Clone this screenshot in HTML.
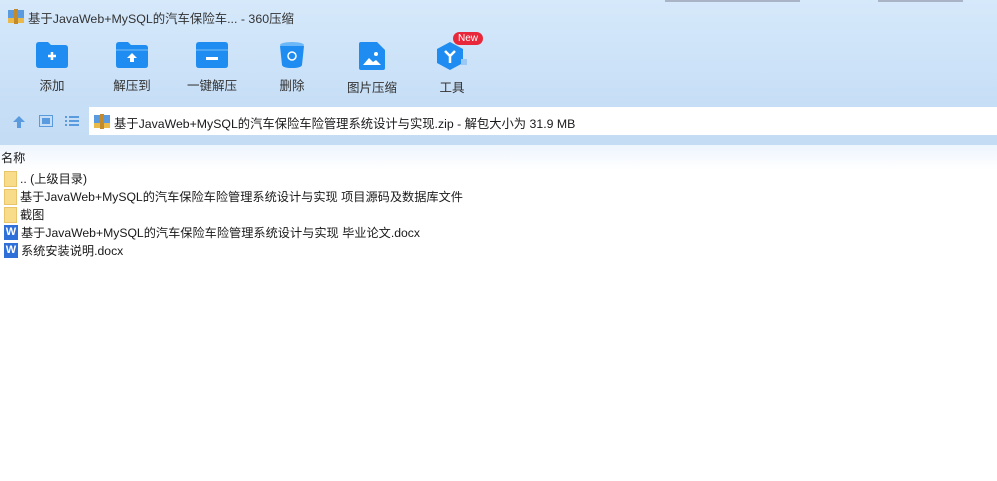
<!DOCTYPE html>
<html><head><meta charset="utf-8"><style>
*{margin:0;padding:0;box-sizing:border-box}
body{width:997px;height:481px;overflow:hidden;background:#fff;font-family:"Liberation Sans","Noto Sans CJK SC",sans-serif;font-size:12px;color:#1a1a1a;position:relative}
.top{position:absolute;left:0;top:0;width:997px;height:145px;background:linear-gradient(#d6e9fb,#c6def6 105px,#c4ddf5)}
.shadow{position:absolute;top:0;height:2px;background:#556;opacity:.35}
.title{position:absolute;left:28px;top:9px;font-size:12.4px;color:#333}
.btn{position:absolute;top:42px;width:60px;text-align:center;font-size:12.5px;color:#333}
.btn svg{display:block;margin:0 auto 7px}
.addr{position:absolute;left:89px;top:107px;width:908px;height:28px;background:#fff}
.addr span{position:absolute;left:25px;top:7px;font-size:12.3px}
.list{position:absolute;left:0;top:145px;width:997px;height:336px;background:linear-gradient(#eef5fd,#fff 25px)}
.row{position:absolute;left:4px;height:18px;font-size:12.2px;line-height:18px}
.row i{display:inline-block;vertical-align:top;margin-right:3px}
.fold{width:13px;height:16px;background:#f9dc8a;border:1px solid #e8c56a;margin-top:1px}
.w{width:14px;height:15px;background:#2f6fd8;color:#fff;font-style:normal;font-weight:bold;font-size:11px;text-align:center;line-height:15px;margin-top:1px}
</style></head><body>
<div class="top"></div>
<div class="shadow" style="left:665px;width:135px"></div>
<div class="shadow" style="left:878px;width:85px"></div>
<svg style="position:absolute;left:8px;top:9px" width="16" height="15"><rect x="0" y="1" width="16" height="13" fill="#5a9be0"/><rect x="0" y="9" width="16" height="5" fill="#e9b94a"/><rect x="6" y="0" width="4" height="15" fill="#c28a2a"/></svg>
<div class="title">基于JavaWeb+MySQL的汽车保险车... - 360压缩</div>

<div class="btn" style="left:22px"><svg width="32" height="26"><path d="M0 3q0-3 3-3h9l3 3h14q3 0 3 3v17q0 3-3 3H3q-3 0-3-3z" fill="#1e8cf0"/><path d="M12 14h8M16 10v8" stroke="#fff" stroke-width="2.5"/></svg>添加</div>
<div class="btn" style="left:102px"><svg width="32" height="26"><path d="M0 3q0-3 3-3h9l3 3h14q3 0 3 3v17q0 3-3 3H3q-3 0-3-3z" fill="#1e8cf0"/><path d="M0 8h32" stroke="#7cc0f8" stroke-width="1"/><path d="M11 16l5-5 5 5h-3v4h-4v-4z" fill="#fff"/></svg>解压到</div>
<div class="btn" style="left:182px"><svg width="32" height="26"><path d="M0 3q0-3 3-3h26q3 0 3 3v20q0 3-3 3H3q-3 0-3-3z" fill="#1e8cf0"/><path d="M0 8h32" stroke="#7cc0f8"/><rect x="10" y="15" width="12" height="3" fill="#fff"/></svg>一键解压</div>
<div class="btn" style="left:262px"><svg width="26" height="26"><ellipse cx="13" cy="3" rx="12" ry="3" fill="#6bb7f7"/><path d="M1 4h24l-2 19q-1 3-10 3t-10-3z" fill="#1e8cf0"/><circle cx="13" cy="14" r="4" fill="none" stroke="#fff" stroke-width="1.5"/></svg>删除</div>
<div class="btn" style="left:342px"><svg width="26" height="28"><path d="M0 2q0-2 2-2h16l8 8v18q0 2-2 2H2q-2 0-2-2z" fill="#1e8cf0"/><path d="M4 23l6-7 4 4 3-2 5 5z" fill="#fff"/><circle cx="17" cy="12" r="2" fill="#fff"/></svg>图片压缩</div>
<div class="btn" style="left:422px"><svg width="32" height="28"><path d="M14 0l13 7v14l-13 7-13-7V7z" fill="#1e8cf0"/><path d="M9 9l5 5 5-5M14 14v7" stroke="#fff" stroke-width="2.5" fill="none"/><rect x="25" y="17" width="6" height="6" fill="#9cc9f3"/></svg>工具</div>
<div style="position:absolute;left:453px;top:32px;background:#e8283a;color:#fff;font-size:10px;border-radius:7px;padding:0 5px;line-height:13px">New</div>

<svg style="position:absolute;left:12px;top:115px" width="14" height="14"><path d="M7 1l6 6H9v6H5V7H1z" fill="#5a9be0"/></svg>
<svg style="position:absolute;left:39px;top:115px" width="14" height="12"><rect x=".5" y=".5" width="13" height="11" fill="none" stroke="#5a9be0"/><rect x="3" y="3" width="8" height="6" fill="#5a9be0"/></svg>
<svg style="position:absolute;left:65px;top:115px" width="14" height="12"><g fill="#5a9be0"><rect x="0" y="1" width="2" height="2"/><rect x="4" y="1" width="10" height="2"/><rect x="0" y="5" width="2" height="2"/><rect x="4" y="5" width="10" height="2"/><rect x="0" y="9" width="2" height="2"/><rect x="4" y="9" width="10" height="2"/></g></svg>
<div class="addr"><svg style="position:absolute;left:5px;top:7px" width="16" height="15"><rect x="0" y="1" width="16" height="13" fill="#5a9be0"/><rect x="0" y="9" width="16" height="5" fill="#e9b94a"/><rect x="6" y="0" width="4" height="15" fill="#c28a2a"/></svg><span>基于JavaWeb+MySQL的汽车保险车险管理系统设计与实现.zip - 解包大小为 31.9 MB</span></div>

<div class="list">
<div style="position:absolute;left:1px;top:3px;font-size:12.2px">名称</div>
<div class="row" style="top:25px"><i class="fold"></i>.. (上级目录)</div>
<div class="row" style="top:43px"><i class="fold"></i>基于JavaWeb+MySQL的汽车保险车险管理系统设计与实现 项目源码及数据库文件</div>
<div class="row" style="top:61px"><i class="fold"></i>截图</div>
<div class="row" style="top:79px"><i class="w">W</i>基于JavaWeb+MySQL的汽车保险车险管理系统设计与实现 毕业论文.docx</div>
<div class="row" style="top:97px"><i class="w">W</i>系统安装说明.docx</div>
</div>
</body></html>
